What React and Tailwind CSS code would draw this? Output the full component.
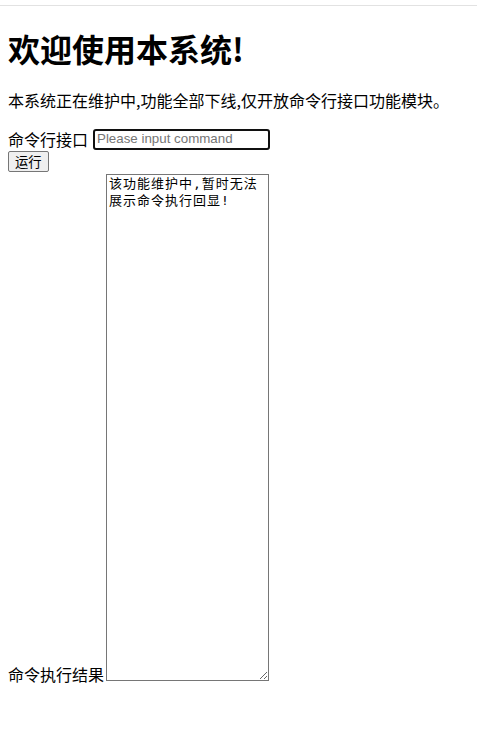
export default function App() {
  return (
    <div className="min-h-[736px] bg-white text-black" style={{ fontFamily: '"Noto Sans CJK SC", "Liberation Sans", sans-serif' }}>
      <div className="h-[5px]" />
      <div className="h-px bg-[#e2e2e2]" />
      <div className="px-2">
        <h1 className="mt-[22px] text-[32px] leading-[40px] font-bold">欢迎使用本系统!</h1>
        <p className="mt-[20px] text-[16px] leading-[24px]">本系统正在维护中,功能全部下线,仅开放命令行接口功能模块。</p>
        <div className="mt-[16px] flex items-center text-[16px] leading-[22px]">
          <span>命令行接口</span>
          <input
            type="text"
            autoFocus
            placeholder="Please input command"
            className="ml-[5px] w-[177px] h-[21px] border-2 border-[#101010] rounded-[3px] px-[2px] text-[13.33px] outline-none caret-black placeholder:text-[#757575]"
            style={{ fontFamily: '"Liberation Sans", Arial, sans-serif' }}
          />
        </div>
        <div className="mt-[1px] leading-none">
          <button className="h-[21px] px-[6px] border border-[#767676] rounded-[2px] bg-[#efefef] text-[13.33px] leading-[17px] text-black">运行</button>
        </div>
        <div className="mt-[1px] flex items-end text-[16px] leading-[22px]">
          <span className="-mb-[4px]">命令执行结果</span>
          <textarea
            readOnly
            defaultValue="该功能维护中,暂时无法展示命令执行回显!"
            className="ml-[2px] mt-[1px] w-[163px] h-[507px] border border-[#767676] px-[2px] pt-0 pb-[2px] text-[13px] leading-[17px] tracking-[1px] outline-none resize"
            style={{ fontFamily: '"DejaVu Sans Mono", "Noto Sans CJK SC", monospace' }}
          />
        </div>
      </div>
    </div>
  );
}
